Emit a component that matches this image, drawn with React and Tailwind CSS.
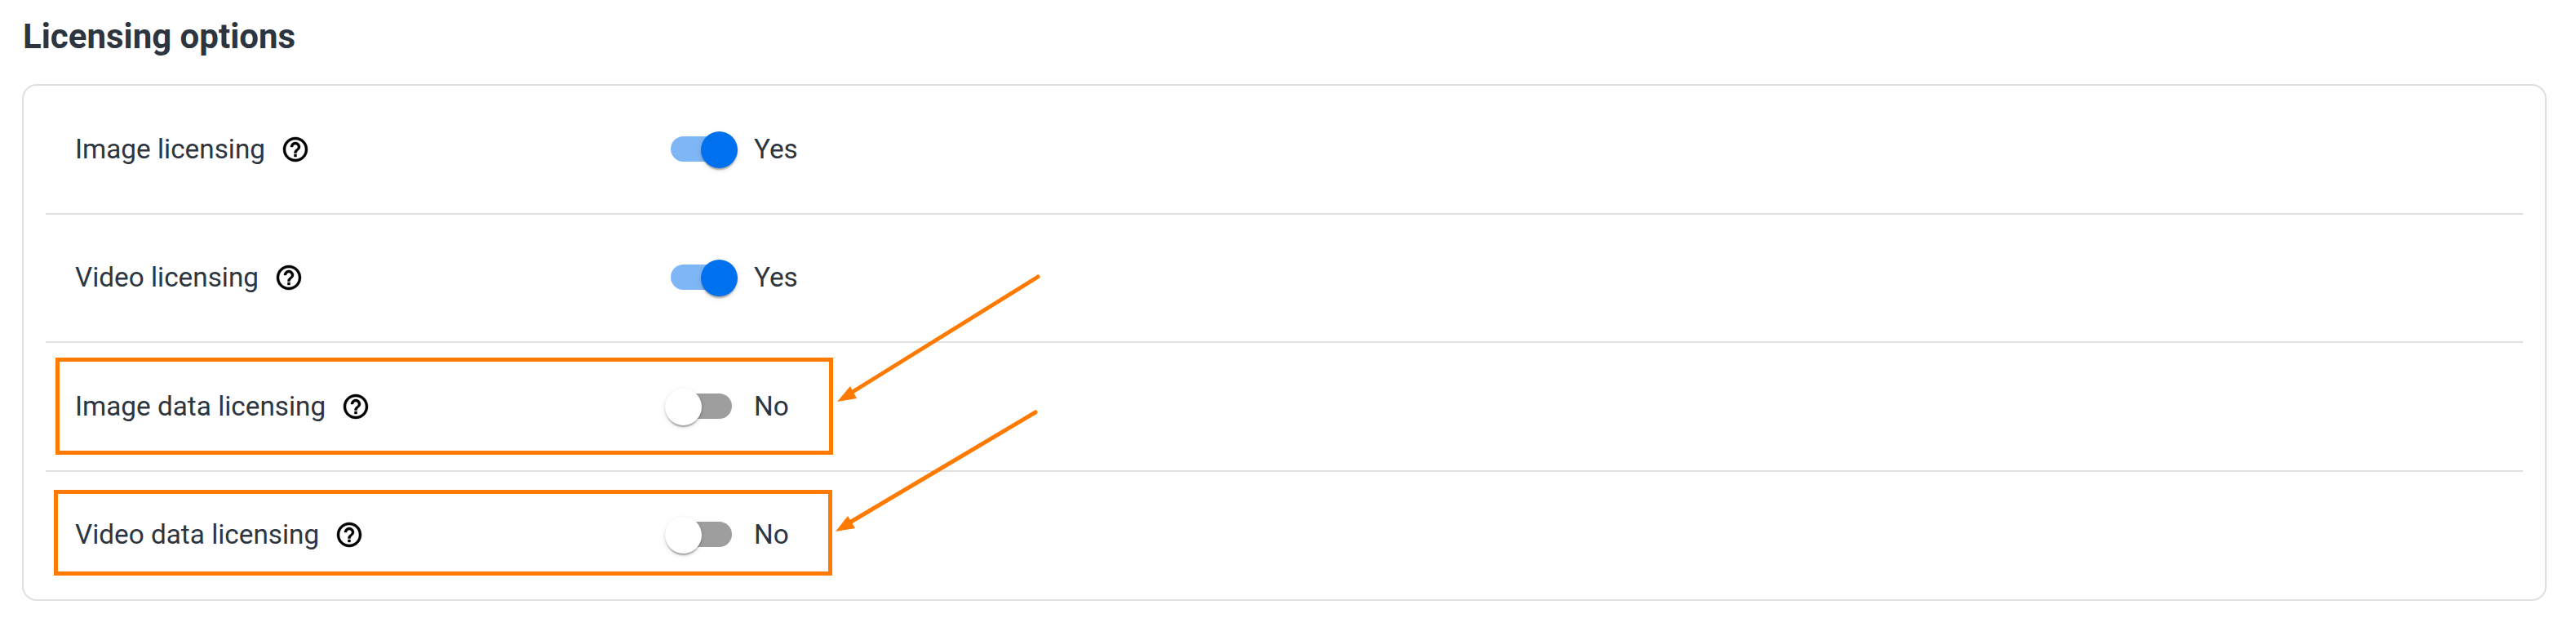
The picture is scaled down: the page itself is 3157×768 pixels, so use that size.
import React from "react";

const rows = [
  { label: "Image licensing", on: true },
  { label: "Video licensing", on: true },
  { label: "Image data licensing", on: false },
  { label: "Video data licensing", on: false },
];

function HelpIcon() {
  return (
    <svg viewBox="0 0 24 24" className="h-[36px] w-[36px] shrink-0 text-black" fill="currentColor" stroke="currentColor" strokeWidth="0.3">
      <path d="M11 18h2v-2h-2v2zm1-16C6.48 2 2 6.48 2 12s4.48 10 10 10 10-4.48 10-10S17.52 2 12 2zm0 18c-4.41 0-8-3.59-8-8s3.59-8 8-8 8 3.59 8 8-3.59 8-8 8zm0-14c-2.21 0-4 1.79-4 4h2c0-1.1.9-2 2-2s2 .9 2 2c0 2-3 1.75-3 5h2c0-2.25 3-2.5 3-5 0-2.21-1.79-4-4-4z" />
    </svg>
  );
}

function Toggle({ on }) {
  return (
    <div className="relative h-[44px] w-[82px] shrink-0">
      <div className={on ? "absolute left-[7px] top-[6px] h-[31px] w-[75px] rounded-full bg-[#7fb6f6]" : "absolute left-[7px] top-[6px] h-[31px] w-[75px] rounded-full bg-[#9e9e9e]"} />
      <div
        className={
          on
            ? "absolute left-[44px] top-0 h-[45px] w-[45px] rounded-full bg-[#0071ee] shadow-[0_4px_2px_-2px_rgba(0,0,0,0.2),0_2px_2px_0_rgba(0,0,0,0.14),0_2px_6px_0_rgba(0,0,0,0.12)]"
            : "absolute left-0 top-0 h-[45px] w-[45px] rounded-full bg-white shadow-[0_4px_2px_-2px_rgba(0,0,0,0.2),0_2px_2px_0_rgba(0,0,0,0.14),0_2px_6px_0_rgba(0,0,0,0.12)]"
        }
      />
    </div>
  );
}

function Row({ label, on, last }) {
  return (
    <div className={last ? "flex h-[155px] items-center pl-[36px]" : "flex h-[157.5px] items-center border-b-2 border-[#e0e0e0] pl-[36px]"}>
      <div className="flex w-[723px] shrink-0 items-center gap-[19px]">
        <span className="text-[33.3px] leading-[40px] text-[#2d3540]">{label}</span>
        <HelpIcon />
      </div>
      <Toggle on={on} />
      <span className="ml-[27px] text-[33.3px] leading-[40px] text-[#2d3540]">{on ? "Yes" : "No"}</span>
    </div>
  );
}

export default function App() {
  return (
    <div className="relative h-[768px] w-[3157px] overflow-hidden bg-white font-['Roboto',sans-serif]">
      <div className="pl-[28px] pt-[21px]">
        <h2 className="text-[42px] font-bold leading-[47px] text-[#2d3540]">Licensing options</h2>
      </div>
      <div className="ml-[27px] mt-[35px] h-[633px] w-[3094px] rounded-[18px] border-2 border-[#e0e0e0] px-[27px]">
        {rows.map((r, i) => (
          <Row key={r.label} {...r} last={i === rows.length - 1} />
        ))}
      </div>

      <div className="absolute left-[68px] top-[438px] h-[119px] w-[953px] border-[5px] border-[#ff7a00]" />
      <div className="absolute left-[66px] top-[600px] h-[105px] w-[954px] border-[5px] border-[#ff7a00]" />

      <svg className="absolute left-0 top-0" width="3157" height="768" fill="none">
        <line x1="1272" y1="339" x2="1040" y2="483" stroke="#ff7a00" strokeWidth="5" strokeLinecap="round" />
        <polygon points="1026,492 1042,473 1050,488" fill="#ff7a00" />
        <line x1="1269" y1="505" x2="1038" y2="642" stroke="#ff7a00" strokeWidth="5" strokeLinecap="round" />
        <polygon points="1024,651 1039,632 1048,647" fill="#ff7a00" />
      </svg>
    </div>
  );
}
